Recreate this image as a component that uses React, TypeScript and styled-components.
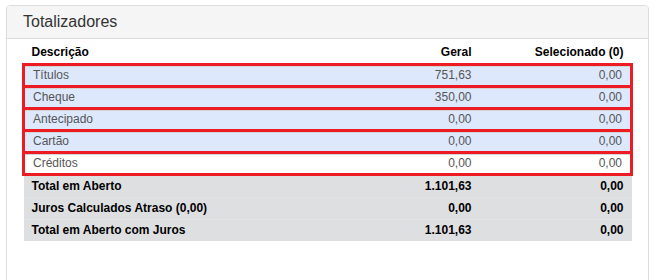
import React from "react";
import styled, { createGlobalStyle } from "styled-components";

type Linha = {
  descricao: string;
  geral: string;
  selecionado: string;
  marcada?: boolean;
  azul?: boolean;
  total?: boolean;
};

const linhas: Linha[] = [
  { descricao: "Títulos", geral: "751,63", selecionado: "0,00", marcada: true, azul: true },
  { descricao: "Cheque", geral: "350,00", selecionado: "0,00", marcada: true, azul: true },
  { descricao: "Antecipado", geral: "0,00", selecionado: "0,00", marcada: true, azul: true },
  { descricao: "Cartão", geral: "0,00", selecionado: "0,00", marcada: true, azul: true },
  { descricao: "Créditos", geral: "0,00", selecionado: "0,00", marcada: true },
  { descricao: "Total em Aberto", geral: "1.101,63", selecionado: "0,00", total: true },
  { descricao: "Juros Calculados Atraso (0,00)", geral: "0,00", selecionado: "0,00", total: true },
  { descricao: "Total em Aberto com Juros", geral: "1.101,63", selecionado: "0,00", total: true },
];

const App: React.FC = () => {
  return (
    <>
      <GlobalStyle />
      <Panel>
        <PanelHeading>
          <PanelTitle>Totalizadores</PanelTitle>
        </PanelHeading>
        <PanelBody>
          <Tabela>
            <thead>
              <tr>
                <Th>Descrição</Th>
                <Th $right $width={152}>
                  Geral
                </Th>
                <Th $right $width={152}>
                  Selecionado (0)
                </Th>
              </tr>
            </thead>
            <tbody>
              {linhas.map((l) => (
                <Tr key={l.descricao} $marcada={l.marcada} $azul={l.azul} $total={l.total}>
                  <Td $marcada={l.marcada}>{l.descricao}</Td>
                  <Td $marcada={l.marcada} $right>
                    {l.geral}
                  </Td>
                  <Td $marcada={l.marcada} $right>
                    {l.selecionado}
                  </Td>
                </Tr>
              ))}
            </tbody>
          </Tabela>
        </PanelBody>
      </Panel>
    </>
  );
};

const GlobalStyle = createGlobalStyle`
  html, body {
    overflow: hidden;
  }
  body {
    margin: 0;
    background: #fff;
    font-family: "Liberation Sans", Arial, sans-serif;
    font-size: 12px;
    color: #333;
  }
`;

const Panel = styled.div`
  margin: 5px 6px 0 6px;
  height: 300px;
  background: #fff;
  border: 1px solid #ddd;
  border-radius: 4px;
  box-shadow: 0 1px 1px rgba(0, 0, 0, 0.05);
`;

const PanelHeading = styled.div`
  height: 32px;
  padding: 0 16px;
  display: flex;
  align-items: center;
  background: #f5f5f5;
  border-bottom: 1px solid #ddd;
  border-radius: 3px 3px 0 0;
`;

const PanelTitle = styled.h3`
  margin: 0;
  font-size: 16px;
  font-weight: normal;
  color: #333;
`;

const PanelBody = styled.div`
  padding: 3px 15px 15px 15px;
`;

const Tabela = styled.table`
  width: 100%;
  border-collapse: collapse;
  border-spacing: 0;
`;

const Th = styled.th<{ $right?: boolean; $width?: number }>`
  height: 22px;
  padding: 2px 8px;
  box-sizing: border-box;
  text-align: ${({ $right }) => ($right ? "right" : "left")};
  width: ${({ $width }) => ($width ? `${$width}px` : "auto")};
  font-weight: bold;
  color: #000;
  line-height: 17px;
  vertical-align: middle;
`;

const Tr = styled.tr<{ $marcada?: boolean; $azul?: boolean; $total?: boolean }>`
  background: ${({ $azul, $total }) => ($azul ? "#dde8fc" : $total ? "#dedfe1" : "#fff")};
  border: ${({ $marcada }) => ($marcada ? "3px solid #ed1c24" : "none")};
  border-top: ${({ $marcada, $total }) =>
    $marcada ? "3px solid #ed1c24" : $total ? "1px solid #e2e3e5" : "none"};
  color: ${({ $total }) => ($total ? "#000" : "#555")};
  font-weight: ${({ $total }) => ($total ? "bold" : "normal")};
`;

const Td = styled.td<{ $right?: boolean; $marcada?: boolean }>`
  padding: ${({ $marcada }) => ($marcada ? "1px 8px" : "2px 8px")};
  line-height: 17px;
  text-align: ${({ $right }) => ($right ? "right" : "left")};
  vertical-align: middle;
  box-shadow: ${({ $marcada }) => ($marcada ? "inset 0 1px 0 #d4d4d4" : "none")};
`;

export default App;
